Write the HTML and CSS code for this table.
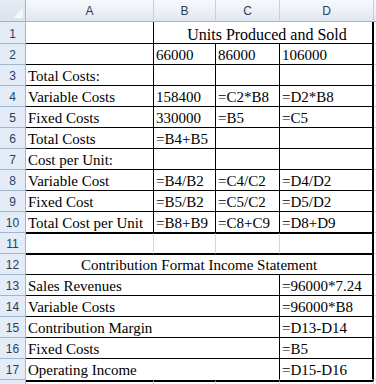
FILE: index.html
```html
<!DOCTYPE html>
<html>
<head>
<meta charset="utf-8">
<link rel="stylesheet" href="styles.css">
</head>
<body>
<div class="sheet">
  <div class="corner"><span class="tri"></span></div>
  <div class="ch">A</div><div class="ch">B</div><div class="ch">C</div><div class="ch">D</div><div class="ch e"></div>

  <div class="rh">1</div>
  <div class="c b r"></div>
  <div class="c b R span3 center title">Units Produced and Sold</div>
  <div class="c e"></div>

  <div class="rh">2</div>
  <div class="c b r"></div><div class="c b r">66000</div><div class="c b r">86000</div><div class="c b R">106000</div>
  <div class="c e"></div>

  <div class="rh">3</div>
  <div class="c b r">Total Costs:</div><div class="c b r"></div><div class="c b r"></div><div class="c b R"></div>
  <div class="c e"></div>

  <div class="rh">4</div>
  <div class="c b r">Variable Costs</div><div class="c b r">158400</div><div class="c b r">=C2*B8</div><div class="c b R">=D2*B8</div>
  <div class="c e"></div>

  <div class="rh">5</div>
  <div class="c b r">Fixed Costs</div><div class="c b r">330000</div><div class="c b r">=B5</div><div class="c b R">=C5</div>
  <div class="c e"></div>

  <div class="rh">6</div>
  <div class="c b r">Total Costs</div><div class="c b r">=B4+B5</div><div class="c b r"></div><div class="c b R"></div>
  <div class="c e"></div>

  <div class="rh">7</div>
  <div class="c b r">Cost per Unit:</div><div class="c b r"></div><div class="c b r"></div><div class="c b R"></div>
  <div class="c e"></div>

  <div class="rh">8</div>
  <div class="c b r">Variable Cost</div><div class="c b r">=B4/B2</div><div class="c b r">=C4/C2</div><div class="c b R">=D4/D2</div>
  <div class="c e"></div>

  <div class="rh">9</div>
  <div class="c b r">Fixed Cost</div><div class="c b r">=B5/B2</div><div class="c b r">=C5/C2</div><div class="c b R">=D5/D2</div>
  <div class="c e"></div>

  <div class="rh">10</div>
  <div class="c b r">Total Cost per Unit</div><div class="c b r">=B8+B9</div><div class="c b r">=C8+C9</div><div class="c b R">=D8+D9</div>
  <div class="c e"></div>

  <div class="rh">11</div>
  <div class="c t b"></div><div class="c t b"></div><div class="c t b"></div><div class="c t b R"></div>
  <div class="c e"></div>

  <div class="rh">12</div>
  <div class="c t b R span4 center">Contribution Format Income Statement</div>
  <div class="c e"></div>

  <div class="rh">13</div>
  <div class="c b r span3">Sales Revenues</div><div class="c b R">=96000*7.24</div>
  <div class="c e"></div>

  <div class="rh">14</div>
  <div class="c b r span3">Variable Costs</div><div class="c b R">=96000*B8</div>
  <div class="c e"></div>

  <div class="rh">15</div>
  <div class="c b r span3">Contribution Margin</div><div class="c b R">=D13-D14</div>
  <div class="c e"></div>

  <div class="rh">16</div>
  <div class="c b r span3">Fixed Costs</div><div class="c b R">=B5</div>
  <div class="c e"></div>

  <div class="rh">17</div>
  <div class="c w r span3">Operating Income</div><div class="c w R">=D15-D16</div>
  <div class="c e"></div>

  <div class="rh last"></div>
  <div class="c T"></div><div class="c T"></div><div class="c T"></div><div class="c T"></div>
  <div class="c e"></div>
</div>
</body>
</html>
```

FILE: styles.css
```css
html, body {
  margin: 0;
  padding: 0;
  background: #ffffff;
  overflow: hidden;
}

.sheet {
  display: grid;
  grid-template-columns: 26px 128px 62px 64px 94px 2px;
  grid-template-rows: 22px 22px repeat(16, 21px) 5px;
  width: 376px;
  height: 384px;
  overflow: hidden;
}

.sheet > div {
  box-sizing: border-box;
  min-width: 0;
  overflow: hidden;
}

.corner {
  background: linear-gradient(#e6ecf4, #d9e2ee);
  border-right: 1px solid #9eb6ce;
  border-bottom: 1px solid #9eb6ce;
  position: relative;
}

.corner .tri {
  position: absolute;
  right: 2px;
  bottom: 3px;
  width: 0;
  height: 0;
  border-left: 10px solid transparent;
  border-bottom: 10px solid #f4f7fa;
}

.ch {
  background: linear-gradient(#f7f9fc 0%, #edf1f7 50%, #dfe6ef 100%);
  border-right: 1px solid #c5d1df;
  border-bottom: 1px solid #9eb6ce;
  font-family: "Liberation Sans", Arial, sans-serif;
  font-size: 12px;
  color: #27405f;
  display: flex;
  align-items: center;
  justify-content: center;
  padding-top: 1px;
}

.rh {
  background: #e4ecf7;
  border-right: 1px solid #9eb6ce;
  border-bottom: 1px solid #9eb6ce;
  font-family: "Liberation Sans", Arial, sans-serif;
  font-size: 12px;
  color: #27405f;
  display: flex;
  align-items: center;
  justify-content: center;
  padding-top: 2px;
}

.c {
  border-right: 1px solid #d0d7e5;
  border-bottom: 1px solid #d0d7e5;
  font-family: "Liberation Serif", "Times New Roman", serif;
  font-size: 15px;
  line-height: 17px;
  color: #000000;
  white-space: nowrap;
  display: flex;
  align-items: flex-end;
  padding-left: 2px;
}

.c.b { border-bottom-color: #000000; }
.c.w { border-bottom-color: #ffffff; }
.c.r { border-right-color: #000000; }
.c.R { border-right: 2px solid #000000; }
.c.t { border-top: 1px solid #000000; }
.c.T { border-top: 2px solid #000000; }

.span3 { grid-column: span 3; }
.span4 { grid-column: span 4; }
.center { justify-content: center; padding-left: 0; }
.title { font-size: 16px; padding-left: 8px; }

.c.e { border-right: none; }
.ch.e { border-right: none; }
```
